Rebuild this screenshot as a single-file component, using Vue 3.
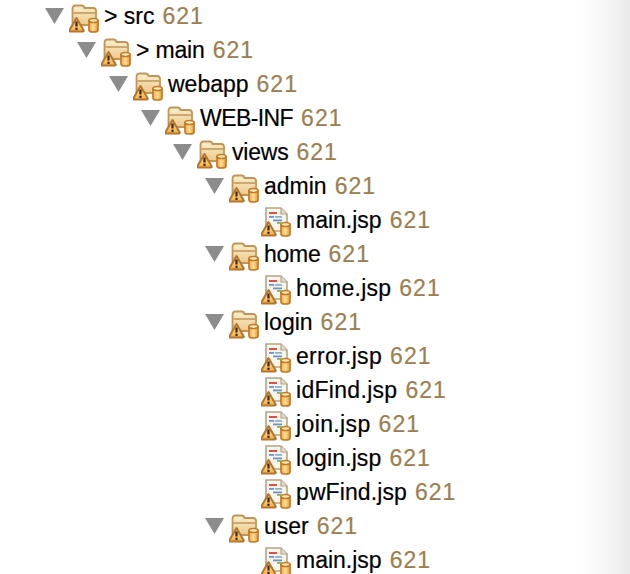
<script setup>
const rows = [
  [0, '> src', 1, 0], [1, '> main', 1, -1], [2, 'webapp', 1, 0], [3, 'WEB-INF', 1, -4], [4, 'views', 1, -1],
  [5, 'admin', 1, 0], [6, 'main.jsp', 0, 0], [5, 'home', 1, -1], [6, 'home.jsp', 0, 2], [5, 'login', 1, 0],
  [6, 'error.jsp', 0, 3], [6, 'idFind.jsp', 0, 3], [6, 'join.jsp', 0, 3], [6, 'login.jsp', 0, 1], [6, 'pwFind.jsp', 0, 1],
  [5, 'user', 1, 0], [6, 'main.jsp', 0, 0]
].map(([depth, name, folder, dx]) => ({ depth, name, folder: !!folder, spacing: dx / name.length }))
</script>

<template>
  <div class="tree">
    <svg width="0" height="0" class="defs">
      <defs>
        <linearGradient id="fold" x1="0" y1="0" x2="0" y2="1">
          <stop offset="0" stop-color="#fbeecb" /><stop offset="1" stop-color="#e9c98a" />
        </linearGradient>
        <linearGradient id="warn" x1="0" y1="0" x2="0" y2="1">
          <stop offset="0" stop-color="#ffeaa8" /><stop offset="1" stop-color="#f4ae48" />
        </linearGradient>
        <linearGradient id="can" x1="0" y1="0" x2="1" y2="0">
          <stop offset="0" stop-color="#f6ae4c" /><stop offset="0.5" stop-color="#fcdc94" /><stop offset="1" stop-color="#e8983a" />
        </linearGradient>
        <g id="badges">
          <path d="M7.5 15 L14.6 27.2 Q15.2 28.6 13.6 28.6 H1.4 Q-0.2 28.6 0.4 27.2 Z" fill="url(#warn)" stroke="#b5742e" stroke-width="2" stroke-linejoin="round" />
          <rect x="6.4" y="18.5" width="2.2" height="5" fill="#3a2508" />
          <rect x="6.4" y="24.7" width="2.2" height="2.2" fill="#3a2508" />
          <path d="M20 18 V27 Q20 29 24.5 29 Q29 29 29 27 V18 Z" fill="url(#can)" stroke="#c27a26" stroke-width="1.7" />
          <ellipse cx="24.5" cy="17.5" rx="4.5" ry="2" fill="#fdebbc" stroke="#c27a26" stroke-width="1.7" />
        </g>
      </defs>
    </svg>
    <div v-for="(row, i) in rows" :key="i" class="row" :style="{ paddingLeft: 45 + row.depth * 32 + 'px' }">
      <svg v-if="row.folder" class="arrow" width="19" height="16" viewBox="0 0 19 16"><path d="M0 0 H19 L9.5 16 Z" fill="#8c8c8c" /></svg>
      <span v-else class="arrow"></span>
      <svg class="icon" width="31" height="32" viewBox="0 0 31 32">
        <template v-if="row.folder">
          <path d="M3.5 22 V6 Q3.5 2.5 6.5 2.5 H12.5 Q15 2.5 15.5 5 H24 Q27 5 27 8 V22 Z" fill="url(#fold)" stroke="#c1955a" stroke-width="1.8" />
          <path d="M4.5 10 H26" stroke="#c1955a" stroke-width="1.5" />
        </template>
        <template v-else>
          <path d="M5 24 V1 H20 L26 7 V24 Z" fill="#f6f5ee" stroke="#b3a486" stroke-width="1.6" />
          <path d="M20 1 V7 H26" fill="#e4dcc4" stroke="#b3a486" stroke-width="1.2" />
          <rect x="8" y="5" width="8" height="2" fill="#d9534a" />
          <rect x="8" y="9" width="5" height="1.8" fill="#6e95c8" />
          <rect x="14" y="9" width="7" height="1.8" fill="#8ab4d8" />
          <rect x="12" y="12.5" width="9" height="1.8" fill="#6e95c8" />
          <rect x="16" y="15" width="4" height="1.8" fill="#78b96a" />
        </template>
        <use href="#badges" />
      </svg>
      <span class="name" :style="{ letterSpacing: row.spacing + 'px' }">{{ row.name }}</span>
      <span class="count">621</span>
    </div>
  </div>
</template>

<style scoped>
.tree {
  width: 630px;
  height: 574px;
  overflow: hidden;
  display: flex;
  flex-direction: column;
  background: linear-gradient(to right, #fff 0, #fff 580px, #f7f7f7 605px, #e9e9e9 630px);
  font-family: "Liberation Sans", Arial, sans-serif;
  font-size: 23px;
  -webkit-text-stroke: 0.2px currentColor;
}
.defs { position: absolute; }
.row {
  flex: 0 0 34px;
  height: 34px;
  display: flex;
  align-items: center;
  white-space: nowrap;
  position: relative;
  top: -1px;
}
.arrow { width: 19px; flex: 0 0 19px; margin-right: 5px; margin-top: -1px; }
.icon { flex: 0 0 31px; margin-right: 4px; align-self: flex-start; margin-top: 4px; }
.name { color: #000; }
.count { color: #9a8050; margin-left: 8px; letter-spacing: 1px; }
</style>
